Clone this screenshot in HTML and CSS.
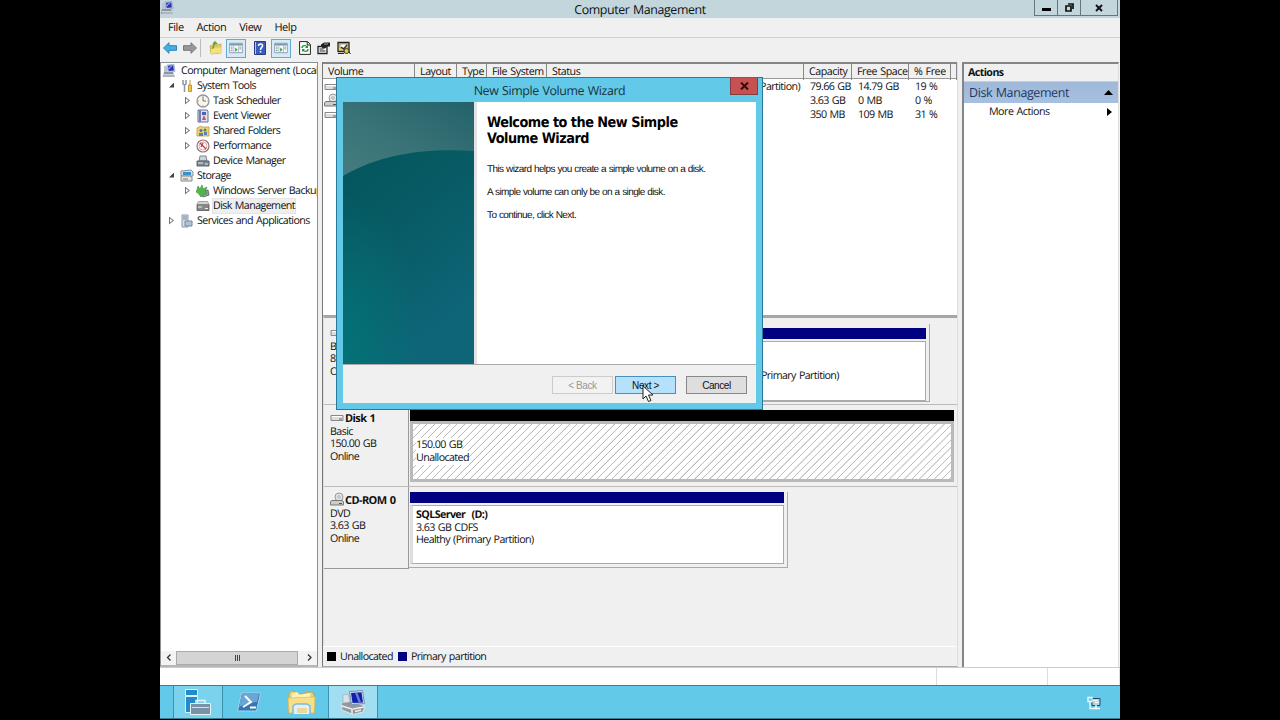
FILE: index.html
```html
<!DOCTYPE html>
<html lang="en">
<head>
    <meta charset="UTF-8">
    <meta name="viewport" content="width=device-width, initial-scale=1.0">
    <title>Computer Management</title>
    <link rel="stylesheet" href="styles.css">
</head>
<body>
    <!-- Shared icons -->
    <svg class="sprite">
        <symbol id="i-computer" viewBox="0 0 14 14">
            <path d="M1 8h9l2 5H0z" fill="#8b94a3"/>
            <path d="M1 10.500h10M1 12h11" stroke="#e1e5eb" stroke-width=".8"/>
            <path d="M4 1l7-.6 1 7-7 .9z" fill="#d1d7e6" stroke="#8995ae" stroke-width=".6"/>
            <path d="M5 1.700l5.200-.5.700 5.200-5.200.7z" fill="#2634ba"/>
            <path d="M5.500 4l3-2.500 1.500-.2-4.200 4.200z" fill="#9faaf1"/>
            <path d="M1 2h3v6H1z" fill="#bac4d4"/>
        </symbol>
        <symbol id="i-drive" viewBox="0 0 14 8">
            <path d="M1 1.500h12v5H1z" fill="#ddd" stroke="#888"/>
            <path d="M2 2.500h10" stroke="#fff"/>
            <path d="M9 5h3" stroke="#666"/>
        </symbol>
        <symbol id="i-cd" viewBox="0 0 14 14">
            <circle cx="9" cy="5" r="4" fill="#e6e6e6" stroke="#999"/>
            <circle cx="9" cy="5" r="1.300" fill="#fff" stroke="#888" stroke-width=".7"/>
            <path d="M1.500 8.500h11l1 1.500v3H.5v-3z" fill="#ccc" stroke="#777"/>
            <path d="M9 11.500h3" stroke="#555"/>
        </symbol>
        <symbol id="i-pane" viewBox="0 0 16 14">
            <path d="M.5 1.500h15v11H.5z" fill="#f7fafc" stroke="#8191a0"/>
            <path d="M1 3h14" stroke="#7f95a7" stroke-width="2"/>
            <path d="M5.500 4v8M11 4v8" stroke="#a7b7c3"/>
            <path d="M2 6h2M2 8h2M2 10h2M12 6h2M12 8h2" stroke="#73889a"/>
            <path d="M7 6.500l3 2.500-3 2.500z" fill="#38a845"/>
        </symbol>
        <symbol id="i-disk" viewBox="0 0 14 12">
            <path d="M1 4.500h12v6H1z" fill="#888" stroke="#555" stroke-width=".8"/>
            <path d="M2.500 1.500h9l1.500 3H1z" fill="#d4d4d4" stroke="#777" stroke-width=".6"/>
            <path d="M2 7h4M9 8.500h3" stroke="#eee"/>
        </symbol>
    </svg>

    <div class="screen">
        <header class="titlebar">
            <svg class="title-icon"><use href="#i-computer"/></svg>
            <span class="title">Computer Management</span>
            <div class="window-buttons">
                <span class="win-btn"><svg width="9" height="9"><path d="M0 5h9v3H0z"/></svg></span>
                <span class="win-btn"><svg width="9" height="9"><path d="M3 1h5v5M1 3h5v5H1z" fill="none" stroke="#111" stroke-width="1.700"/></svg></span>
                <span class="win-btn close"><svg width="8" height="8"><path d="M1 1l6 6M7 1L1 7" stroke="#111" stroke-width="1.900"/></svg></span>
            </div>
        </header>

        <nav class="menubar">
            <span>File</span><span>Action</span><span>View</span><span>Help</span>
        </nav>

        <div class="toolbar">
            <svg class="tool arrow" viewBox="0 0 14 12"><path d="M.5 6L6 .7v3h7.500v4.600H6v3z" fill="#45aee2" stroke="#2784b6"/></svg>
            <svg class="tool arrow forward" viewBox="0 0 14 12"><path d="M13.500 6L8 .7v3H.5v4.600H8v3z" fill="#999" stroke="#777"/></svg>
            <span class="separator"></span>
            <svg class="tool folder-up" viewBox="0 0 14 14"><path d="M1 5l5-2 1 1 5-1v9l-10 1z" fill="#e8c85a" stroke="#bda13e" stroke-width=".7"/><path d="M3 9l3-7M4 3l2-2 2 2" fill="none" stroke="#58a83d" stroke-width="1.500"/><path d="M2 8l11-2-1 6-10 1z" fill="#f5de7b"/></svg>
            <span class="tool-active"><svg viewBox="0 0 16 14"><use href="#i-pane"/></svg></span>
            <svg class="tool help" viewBox="0 0 12 14"><path d="M.5.5h11v13H.5z" fill="#3c5cbb" stroke="#263a87"/><path d="M1.500 1v12" stroke="#b6c5ef"/><path d="M4.500 5c0-3 4.500-2.500 4 0C8.200 6.500 6.500 6.500 6.500 9M6.500 10v1.500" fill="none" stroke="#fff" stroke-width="1.500"/></svg>
            <span class="tool-active"><svg viewBox="0 0 16 14"><use href="#i-pane"/></svg></span>
            <svg class="tool refresh" viewBox="0 0 12 14"><path d="M.6.600h8L11.400 3.500v9.900H.6z" fill="#fff" stroke="#222"/><path d="M8.200 1v3h3" fill="none" stroke="#222"/><path d="M3 7c0-3 4-3 5-1M9 8c0 3-4 3-5 1" fill="none" stroke="#16a232" stroke-width="1.400"/><path d="M9 4v3H6zM3 11V8h3z" fill="#16a232"/></svg>
            <svg class="tool props" viewBox="0 0 14 13"><path d="M1 5h9v7H1z" fill="#fff" stroke="#222" stroke-width="1.300"/><path d="M2.500 7.500h4M2.500 9.500h6" stroke="#222"/><path d="M4 3l3-2h6v4h-3L8 7H6L4 5z" fill="#222"/><path d="M7 2.500h4" stroke="#ddd" stroke-width=".7"/></svg>
            <svg class="tool settings" viewBox="0 0 14 14"><path d="M1 1.500h11v9H1z" fill="#e8d96f" stroke="#222" stroke-width="1.300"/><path d="M3 3h7v4H3z" fill="#fff" stroke="#776a20" stroke-width=".6"/><path d="M4 6l2.500 2L10 4" fill="none" stroke="#333" stroke-width="1.300"/><circle cx="9.500" cy="10" r="2.500" fill="#e8c837" stroke="#333"/><path d="M1 12.500h6M12 11l1.500 2" stroke="#222"/></svg>
        </div>

        <div class="workspace">
            <aside class="tree-pane">
                <ul class="tree">
                    <li class="root"><svg class="tree-icon"><use href="#i-computer"/></svg><span>Computer Management (Local</span></li>
                    <li class="level1"><i class="toggle open"></i><svg class="tree-icon" viewBox="0 0 14 14"><path d="M3 1v4l1.500 1v7M6 1v4L4.500 6" fill="none" stroke="#8c969c" stroke-width="1.500"/><path d="M10 1v5M8.500 6h3v6.500h-3z" fill="#efc64d" stroke="#c49931"/></svg><span>System Tools</span></li>
                    <li class="level2"><i class="toggle"></i><svg class="tree-icon" viewBox="0 0 14 14"><circle cx="7" cy="7" r="6" fill="#f8f6e9" stroke="#9298a0" stroke-width="1.300"/><path d="M7 3v4h3" fill="none" stroke="#59779b"/><path d="M7 1.800v1M7 11.200v1M1.800 7h1M11.200 7h1" stroke="#c29b42"/></svg><span>Task Scheduler</span></li>
                    <li class="level2"><i class="toggle"></i><svg class="tree-icon" viewBox="0 0 14 14"><path d="M2 1h9l1 1v11H2z" fill="#dce1ef" stroke="#6671a0"/><path d="M4 1v12" stroke="#7480b5" stroke-width="2"/><path d="M6 3h4v3H6z" fill="#4865b5"/><path d="M8 6l2 5H6z" fill="#cd504e"/></svg><span>Event Viewer</span></li>
                    <li class="level2"><i class="toggle"></i><svg class="tree-icon" viewBox="0 0 14 14"><path d="M1 4l4-2 1 1h7v9H1z" fill="#ecd178" stroke="#c19d3f" stroke-width=".8"/><circle cx="5" cy="6.500" r="1.500" fill="#4977ac"/><circle cx="9" cy="6" r="1.500" fill="#588b48"/><path d="M3 12V9h4v3M8 11V8h3v3" fill="#5d82aa"/></svg><span>Shared Folders</span></li>
                    <li class="level2"><i class="toggle"></i><svg class="tree-icon" viewBox="0 0 14 14"><circle cx="7" cy="7" r="6" fill="#fff" stroke="#8f7377" stroke-width="1.200"/><circle cx="7" cy="7" r="4" fill="none" stroke="#d98a8d" stroke-width=".8"/><path d="M4 4l6 6M5 8l2-4" stroke="#c43a42" stroke-width="1.300"/></svg><span>Performance</span></li>
                    <li class="level2"><i class="toggle none"></i><svg class="tree-icon" viewBox="0 0 14 14"><path d="M4 2h6l1 5H3z" fill="#cbd4db" stroke="#7a8790"/><path d="M1 7h12v5H1z" fill="#7c878f" stroke="#58646b"/><path d="M2 9h5M9 10h3" stroke="#e1e8eb"/></svg><span>Device Manager</span></li>
                    <li class="level1"><i class="toggle open"></i><svg class="tree-icon" viewBox="0 0 14 14"><path d="M1 2l10-1 2 2v4H1z" fill="#d6e0e6" stroke="#84949f"/><path d="M3 3h8v3H3z" fill="#3990cc"/><path d="M1 7h9l2 1v4H1z" fill="#e6e6de" stroke="#888"/><path d="M3 10h5" stroke="#777"/></svg><span>Storage</span></li>
                    <li class="level2"><i class="toggle"></i><svg class="tree-icon" viewBox="0 0 14 14"><path d="M5 7l7-1 1 5-6 2z" fill="#909aa0" stroke="#66737b"/><path d="M2 2l2 3 2-4 1 4 4-2-2 4 2 2-3 1-3 3-3-4-2-1 1-2z" fill="#52b64c" stroke="#378b32" stroke-width=".6"/></svg><span>Windows Server Backup</span></li>
                    <li class="level2 selected"><i class="toggle none"></i><svg class="tree-icon" viewBox="0 0 14 12"><use href="#i-disk"/></svg><span>Disk Management</span></li>
                    <li class="level1"><i class="toggle"></i><svg class="tree-icon" viewBox="0 0 14 14"><path d="M2 1h6v12H2z" fill="#d8e0e7" stroke="#8899a8"/><path d="M3 3h4M3 5h4" stroke="#6e8599"/><path d="M5 7h7v5H5z" fill="#aec3d6" stroke="#6f8ba4"/></svg><span>Services and Applications</span></li>
                </ul>
                <div class="scrollbar">
                    <svg width="15" height="13"><path d="M9.500 3.500l-3 3 3 3" fill="none" stroke="#333" stroke-width="1.300"/></svg>
                    <div class="thumb"><i></i><i></i><i></i></div>
                    <svg width="15" height="13"><path d="M6 3.500l3 3-3 3" fill="none" stroke="#333" stroke-width="1.300"/></svg>
                </div>
            </aside>

            <main class="center-pane">
                <section class="volume-list">
                    <div class="row head">
                        <span>Volume</span><span>Layout</span><span>Type</span><span>File System</span><span>Status</span><span>Capacity</span><span>Free Space</span><span>% Free</span><span></span>
                    </div>
                    <div class="row">
                        <svg class="vol-icon"><use href="#i-drive"/></svg><span class="status">Partition)</span><span>79.66 GB</span><span>14.79 GB</span><span>19 %</span>
                    </div>
                    <div class="row">
                        <svg class="vol-icon cd"><use href="#i-cd"/></svg><span class="status"></span><span>3.63 GB</span><span>0 MB</span><span>0 %</span>
                    </div>
                    <div class="row">
                        <svg class="vol-icon"><use href="#i-drive"/></svg><span class="status"></span><span>350 MB</span><span>109 MB</span><span>31 %</span>
                    </div>
                </section>

                <section class="disks">
                    <div class="disk">
                        <div class="disk-label">
                            <div class="disk-name"><svg><use href="#i-drive"/></svg></div>
                            <div>Basic</div><div>80.00 GB</div><div>Online</div>
                        </div>
                        <div class="volume boot">
                            <div class="bar"></div>
                            <div class="volume-body"><div>Primary Partition)</div></div>
                        </div>
                    </div>
                    <div class="disk">
                        <div class="disk-label">
                            <div class="disk-name"><svg><use href="#i-drive"/></svg>Disk 1</div>
                            <div>Basic</div><div>150.00 GB</div><div>Online</div>
                        </div>
                        <div class="volume unallocated">
                            <div class="bar"></div>
                            <div class="volume-body"><div><span>150.00 GB</span></div><div><span>Unallocated</span></div></div>
                        </div>
                    </div>
                    <div class="disk">
                        <div class="disk-label">
                            <div class="disk-name cd"><svg><use href="#i-cd"/></svg>CD-ROM 0</div>
                            <div>DVD</div><div>3.63 GB</div><div>Online</div>
                        </div>
                        <div class="volume dvd">
                            <div class="bar"></div>
                            <div class="volume-body"><b>SQLServer&nbsp; (D:)</b><div>3.63 GB CDFS</div><div>Healthy (Primary Partition)</div></div>
                        </div>
                    </div>
                </section>

                <footer class="legend">
                    <i class="swatch"></i><span class="free">Unallocated</span><i class="swatch primary"></i><span>Primary partition</span>
                </footer>
            </main>

            <aside class="actions-pane">
                <div class="actions-head">Actions</div>
                <div class="actions-group"><span>Disk Management</span><svg width="9" height="5"><path d="M0 5l4.500-5L9 5z"/></svg></div>
                <div class="actions-item"><span>More Actions</span><svg width="5" height="8"><path d="M0 0l5 4-5 4z"/></svg></div>
            </aside>
        </div>

        <div class="statusbar"><span></span><span></span><span></span></div>

        <footer class="taskbar">
            <div class="task open">
                <svg width="28" height="28"><path d="M1.500 1.500h12v6h-12zM1.500 8.500h12v16h-12z" fill="#238acb" stroke="#d8f2fb"/><path d="M6.500 15.500h20v11h-20z" fill="#7892a6" stroke="#e3f3fa"/><path d="M12 15v-2.500h9V15" fill="none" stroke="#e3f3fa" stroke-width="1.500"/><path d="M8 19.500h17" stroke="#d5e2ea"/></svg>
            </div>
            <div class="task">
                <svg width="24" height="22"><path d="M4.500 2h19l-4 18H.5z" fill="#3478b3" stroke="#a9d2ec"/><path d="M5 3h17l-2 8C14 11 8 13 2 16z" fill="#69a6d5"/><path d="M8 5l6 6-8 5M13 16.500h6" fill="none" stroke="#fff" stroke-width="2"/></svg>
            </div>
            <div class="task">
                <svg width="29" height="27"><path d="M2 5l2-3 6 1 1 2 14-2 2 3v18H2z" fill="#efd477" stroke="#c9a849"/><path d="M5 5l5-2 3 3 10-2v6H5z" fill="#fff3b9"/><path d="M1 9l27-1-1 16H2z" fill="#f7df8b" stroke="#dbbd58" stroke-width=".7"/><path d="M6 25v-8l3-2h11l3 2v8" fill="#dff1fa" stroke="#83b9d8" stroke-width="1.500"/><path d="M10 24v-5h10v5" fill="#ecd995"/></svg>
            </div>
            <div class="task open current">
                <svg width="28" height="27"><path d="M2 14l10-2 14 5-2 6-10 2.500L3 21z" fill="#9199a1" stroke="#dce4e9"/><path d="M3 17l10 3v5M14 20l11-2M16 22.500l6-1.500" fill="none" stroke="#eee" stroke-width="1.500"/><path d="M10.500 2.500l13-1 2 13-13 1z" fill="#d4e0ee" stroke="#7b90b0"/><path d="M12 4l10.500-.8L24 13.500l-10.500.6z" fill="#1120a8"/><path d="M16 4l2.500-.3L22 13l-2.500.3z" fill="#637ad8"/><path d="M4 6l5-1 2 8-7 1z" fill="#dbe2e8" stroke="#9aa8b4" stroke-width=".6"/></svg>
            </div>
            <svg class="tray" width="14" height="14"><path d="M5 2.500h8v7H5z" fill="#a5d7ea" stroke="#254d60"/><path d="M1 1.500h4v4H1zM3 6v6.500h3" fill="none" stroke="#f4fbfd" stroke-width="1.300"/><path d="M9 9v3M6 12.500h7" stroke="#fff" stroke-width="1.500"/><path d="M6 4.500h5M8 6.500h4" stroke="#fff"/></svg>
        </footer>

        <!-- Wizard window, floats over the console -->
        <div class="wizard">
            <div class="wizard-title">New Simple Volume Wizard</div>
            <div class="wizard-close"><svg width="9" height="8"><path d="M1 .5l7 7M8 .5l-7 7" stroke="#2b0f0d" stroke-width="2"/></svg></div>
            <div class="wizard-page">
                <svg class="wizard-art" viewBox="0 0 132 262" preserveAspectRatio="none">
                    <defs>
                        <linearGradient id="art-base" x1="0" y1="0" x2=".4" y2="1"><stop offset="0" stop-color="#03545b"/><stop offset=".45" stop-color="#075962"/><stop offset="1" stop-color="#0e6577"/></linearGradient>
                        <linearGradient id="art-top" x1="1" y1="0" x2="0" y2="1"><stop offset="0" stop-color="#23626a"/><stop offset=".6" stop-color="#3b7478"/><stop offset="1" stop-color="#437d80"/></linearGradient>
                        <radialGradient id="art-glow" cx="0" cy=".95" r=".6"><stop offset="0" stop-color="#037276"/><stop offset="1" stop-color="#037276" stop-opacity="0"/></radialGradient>
                    </defs>
                    <path d="M0 0h132v262H0z" fill="url(#art-base)"/>
                    <path d="M0 0h132v262H0z" fill="url(#art-glow)"/>
                    <path d="M0 0h132v49C90 46 40 50 0 74z" fill="url(#art-top)"/>
                </svg>
                <div class="wizard-text">
                    <h1>Welcome to the New Simple<br>Volume Wizard</h1>
                    <p>This wizard helps you create a simple volume on a disk.</p>
                    <p>A simple volume can only be on a single disk.</p>
                    <p>To continue, click Next.</p>
                </div>
            </div>
            <div class="wizard-footer">
                <button class="back" disabled>&lt; Back</button>
                <button class="next">Next &gt;</button>
                <button class="cancel">Cancel</button>
            </div>
        </div>

        <svg class="cursor" width="12" height="18"><path d="M1 1v13l3-3 2.500 5.500 2.500-1L6.500 10H11z" fill="#fff" stroke="#222"/></svg>
    </div>
</body>
</html>
```
FILE: styles.css
```css
* {
    box-sizing: border-box;
}
body {
    margin: 0;
    background-color: #000;
    font-family: "Open Sans", "Noto Sans", sans-serif;
    font-size: 10.7px;
    letter-spacing: -.6px;
    word-spacing: .9px;
    text-rendering: geometricPrecision;
    color: #111;
    overflow: hidden;
}
svg {
    display: block;
    flex: none;
}
.sprite {
    width: 0;
    height: 0;
    position: absolute;
}
.screen {
    position: relative;
    width: 960px;
    height: 719px;
    margin: 0 auto;
    display: flex;
    flex-direction: column;
    background-color: #f0f0f0;
    white-space: nowrap;
    overflow: hidden;
}
.titlebar {
    height: 18px;
    display: grid;
    grid-template-columns: 86px 1fr 86px;
    background-color: #c2d6db;
}
.title-icon {
    width: 14px;
    height: 14px;
    margin: 1px 0 0 1px;
}
.title {
    text-align: center;
    font-size: 12.4px;
    letter-spacing: -.4px;
    line-height: 19px;
}
.window-buttons {
    display: flex;
    height: 16px;
    border: 1px solid #64777e;
    border-top: none;
    margin-right: 2px;
}
.win-btn {
    flex: 0 0 23px;
    display: flex;
    align-items: center;
    justify-content: center;
    border-right: 1px solid #64777e;
}
.win-btn.close {
    flex: 1;
    border-right: none;
}
.menubar {
    height: 20px;
    padding-left: 8px;
    display: flex;
    gap: 13px;
    line-height: 20px;
    font-size: 11px;
    letter-spacing: -.45px;
    border-bottom: 1px solid #d0d0d0;
}
.toolbar {
    height: 24px;
    padding: 0 0 4px 3px;
    display: flex;
    align-items: center;
    flex: none;
}
.tool {
    width: 14px;
    height: 14px;
}
.arrow {
    height: 12px;
    margin-right: 6px;
}
.arrow.forward {
    margin-right: 3px;
}
.separator {
    width: 1px;
    height: 18px;
    margin-right: 8px;
    background-color: #bbb;
}
.folder-up {
    margin-right: 3px;
}
.tool-active {
    width: 20px;
    height: 19px;
    display: flex;
    align-items: center;
    justify-content: center;
    background-color: #d5ebf8;
    border: 1px solid #62a9d5;
}
.tool-active svg {
    width: 14px;
    height: 12px;
}
.help {
    width: 12px;
    margin: 0 5px 0 8px;
}
.refresh {
    width: 12px;
    margin: 0 6px 0 8px;
}
.props {
    margin-right: 6px;
}
.workspace {
    height: 605px;
    flex: none;
    display: grid;
    grid-template-columns: 158px 636px 157px;
    column-gap: 4px;
}
.tree-pane {
    display: flex;
    flex-direction: column;
    justify-content: space-between;
    background-color: #fff;
    border: 1px solid #8a8f94;
    border-bottom: 2px solid #b5b5b5;
    overflow: hidden;
}
.tree {
    list-style: none;
    margin: 0;
    padding: 0;
}
.tree li {
    display: flex;
    align-items: center;
    height: 15px;
    line-height: 17px;
}
.tree .root {
    padding-left: 2px;
}
.tree .level1 {
    padding-left: 8px;
}
.tree .level2 {
    padding-left: 24px;
}
.tree-icon {
    width: 14px;
    height: 14px;
    margin-right: 3px;
}
.root .tree-icon {
    margin-right: 4px;
}
.tree span {
    padding-top: 1px;
}
.toggle {
    width: 6px;
    height: 8px;
    margin-right: 5px;
    flex: none;
    background-color: #777;
    clip-path: polygon(0 0, 5px 4px, 0 8px, 0 7px, 1px 6px, 3.500px 4px, 1px 2px, 1px 6px, 0 7px);
}
.toggle.open {
    height: 6px;
    background-color: #444;
    clip-path: polygon(5px 0, 5px 5px, 0 5px);
}
.toggle.none {
    background: none;
}
.tree .selected span {
    height: 14px;
    padding-top: 0;
    margin-right: 1px;
    line-height: 15px;
    background-color: #eee;
    box-shadow: 0 0 0 1px #e5e5e5;
}
.scrollbar {
    display: flex;
    height: 14px;
    background-color: #f3f3f3;
}
.thumb {
    flex: 1;
    display: flex;
    gap: 1px;
    align-items: center;
    justify-content: center;
    margin-right: 4px;
    background-color: #d4d4d4;
    border: 1px solid #aaa;
}
.thumb i {
    width: 1px;
    height: 6px;
    background-color: #444;
}
.center-pane {
    display: flex;
    flex-direction: column;
    min-width: 0;
    border-left: 1px solid #777;
    border-right: 1px solid #ddd;
    border-bottom: 1px solid #aaa;
}
.volume-list {
    height: 253px;
    flex: none;
    background-color: #fff;
    border-top: 2px solid #858585;
    overflow: hidden;
}
.row {
    display: grid;
    grid-template-columns: 92px 42px 30px 60px 257px 48px 57px 42px 1fr;
    height: 14.2px;
    line-height: 16px;
}
.row > span {
    padding-left: 6px;
}
.row .status {
    grid-column: 2 / 6;
    text-align: right;
    padding-right: 4px;
}
.row.head {
    height: 15px;
    line-height: 16px;
    background-color: #f0f0f0;
    border-bottom: 1px solid #999;
    letter-spacing: -.45px;
}
.head span {
    padding-left: 5px;
    border-right: 1px solid #888;
}
.vol-icon {
    width: 14px;
    height: 8px;
    margin: 4px 0 0 1px;
}
.vol-icon.cd {
    height: 14px;
    margin-top: 0;
}
.disks {
    height: 331px;
    flex: none;
    border-top: 3px solid #a6a6a6;
    border-left: 1px solid #ddd;
}
.disk {
    display: flex;
    height: 82px;
    border-bottom: 1px solid #bbb;
}
.disk:first-child {
    height: 87px;
}
.disk:last-child {
    border-bottom: none;
}
.disk-label {
    width: 85px;
    padding: 8px 0 0 6px;
    line-height: 12.6px;
    border-right: 1px solid #999;
}
.disk:last-child .disk-label {
    border-bottom: 1px solid #999;
}
.disk:first-child .disk-label {
    padding-top: 10px;
}
.disk-name {
    display: flex;
    align-items: center;
    height: 12.6px;
    font-weight: bold;
    font-size: 11px;
}
.disk-name svg {
    width: 14px;
    height: 8px;
    margin: -2px 1px 0 0;
}
.disk-name.cd svg {
    height: 14px;
    margin-top: -4px;
}
.volume {
    margin-top: 5px;
    padding-left: 1px;
    height: 76px;
    border-right: 1px solid #aaa;
    border-bottom: 1px solid #aaa;
}
.boot {
    width: 521px;
    height: 78px;
    margin-top: 6px;
}
.dvd {
    width: 379px;
}
.bar {
    height: 11px;
    margin: 0 3px 2px 0;
    background-color: #000080;
}
.boot .bar {
    margin-top: 4px;
}
.volume-body {
    height: 60px;
    margin-right: 3px;
    padding: 3px 0 0 3px;
    line-height: 12.6px;
    background-color: #fff;
    border: 1px solid #aaa;
    border-left: 3px solid #ddd;
}
.boot .volume-body {
    padding-top: 28px;
    padding-left: 348px;
}
.dvd .volume-body {
    height: 59px;
}
.unallocated {
    width: 545px;
    height: 73px;
    border: none;
}
.unallocated .bar {
    background-color: #000;
    margin: 0;
}
.unallocated .volume-body {
    margin: 0;
    padding-top: 15px;
    height: 61px;
    border: 3px solid #b9b9b9;
    background: repeating-linear-gradient(135deg, #fff 0, #fff 4.200px, #bbb 4.600px, #bbb 5.100px, #fff 5.300px);
}
.unallocated span {
    background-color: #fff;
}
.legend {
    flex: 1;
    display: flex;
    align-items: center;
    gap: 4px;
    padding-left: 4px;
    border-top: 1px solid #fff;
}
.legend .free {
    margin-right: 1px;
}
.swatch {
    width: 9px;
    height: 9px;
    background-color: #000;
}
.swatch.primary {
    background-color: #000080;
}
.actions-pane {
    background-color: #fff;
    border-top: 2px solid #858585;
    border-left: 2px solid #858585;
    border-right: 1px solid #ddd;
}
.actions-head {
    height: 17px;
    padding-left: 4px;
    line-height: 18px;
    background-color: #f0f0f0;
    font-weight: bold;
}
.actions-group {
    height: 22px;
    padding: 0 5px 0 5px;
    display: flex;
    align-items: center;
    justify-content: space-between;
    background: linear-gradient(#a0b9da, #a7c0e2);
    border-top: 1px solid #c3d0df;
    font-size: 12.5px;
    letter-spacing: -.42px;
    color: #1e395b;
}
.actions-group svg {
    fill: #000;
}
.actions-item {
    height: 18px;
    padding: 0 6px 0 25px;
    display: flex;
    align-items: center;
    justify-content: space-between;
    letter-spacing: -.5px;
}
.statusbar {
    height: 18px;
    flex: none;
    display: grid;
    grid-template-columns: 777px 111px 1fr;
    background-color: #fff;
    border-top: 1px solid #ccc;
}
.statusbar span {
    border-right: 1px solid #ddd;
}
.taskbar {
    flex: 1;
    display: flex;
    padding-left: 13px;
    background-color: #62c9e8;
    border-top: 1px solid #397d92;
    border-bottom: 1px solid #397d92;
}
.task {
    width: 52px;
    display: flex;
    align-items: center;
    justify-content: center;
}
.task.open {
    width: 50px;
    background-color: #7bd2ed;
    border-left: 1px solid #3991af;
    border-right: 1px solid #3991af;
}
.task.current {
    background-color: #a1def2;
    margin-left: 1px;
}
.tray {
    margin: 10px 19px 0 auto;
}
.wizard {
    position: absolute;
    left: 176px;
    top: 77px;
    width: 427px;
    height: 333px;
    display: flex;
    flex-direction: column;
    padding: 0 6px 6px;
    background-color: #62c9e8;
    border: 1px solid #297a98;
}
.wizard-title {
    height: 24px;
    text-align: center;
    line-height: 25px;
    font-size: 12.4px;
    letter-spacing: -.4px;
    color: #17323d;
}
.wizard-close {
    position: absolute;
    right: 4px;
    top: 0;
    width: 28px;
    height: 17px;
    display: flex;
    align-items: center;
    justify-content: center;
    background-color: #c75050;
    border: 1px solid #813d42;
    border-top: none;
}
.wizard-page {
    height: 263px;
    flex: none;
    display: flex;
    background-color: #fff;
    border-bottom: 1px solid #aaa;
}
.wizard-art {
    width: 131px;
    height: 262px;
}
.wizard-text {
    flex: 1;
    padding: 13px 0 0 10px;
    border-left: 3px solid #e2e2e2;
    word-spacing: 0;
}
.wizard-text h1 {
    margin: 0 0 16px;
    font-family: "DejaVu Sans Condensed", "DejaVu Sans", sans-serif;
    font-size: 14.3px;
    letter-spacing: -.5px;
    line-height: 16px;
    font-weight: bold;
    color: #000;
}
.wizard-text p {
    margin: 0 0 10px;
    height: 13px;
    line-height: 13px;
    font-family: "Liberation Sans", sans-serif;
    font-size: 10px;
    letter-spacing: -.6px;
    word-spacing: .4px;
}
.wizard-footer {
    flex: 1;
    display: flex;
    justify-content: flex-end;
    gap: 2px;
    padding: 11px 9px 0 0;
    background-color: #f0f0f0;
}
.wizard-footer button {
    width: 61px;
    height: 18px;
    padding: 1px 0 0;
    font-family: "Liberation Sans", sans-serif;
    font-size: 10px;
    letter-spacing: -.4px;
    color: #111;
    background-color: #dedede;
    border: 1px solid #888;
}
.wizard-footer .back {
    color: #999;
    background-color: #f2f2f2;
    border-color: #ccc;
}
.wizard-footer .next {
    background-color: #b5e2fa;
    border-color: #4590bd;
}
.wizard-footer .cancel {
    margin-left: 8px;
}
.cursor {
    position: absolute;
    left: 482px;
    top: 385px;
}
```
